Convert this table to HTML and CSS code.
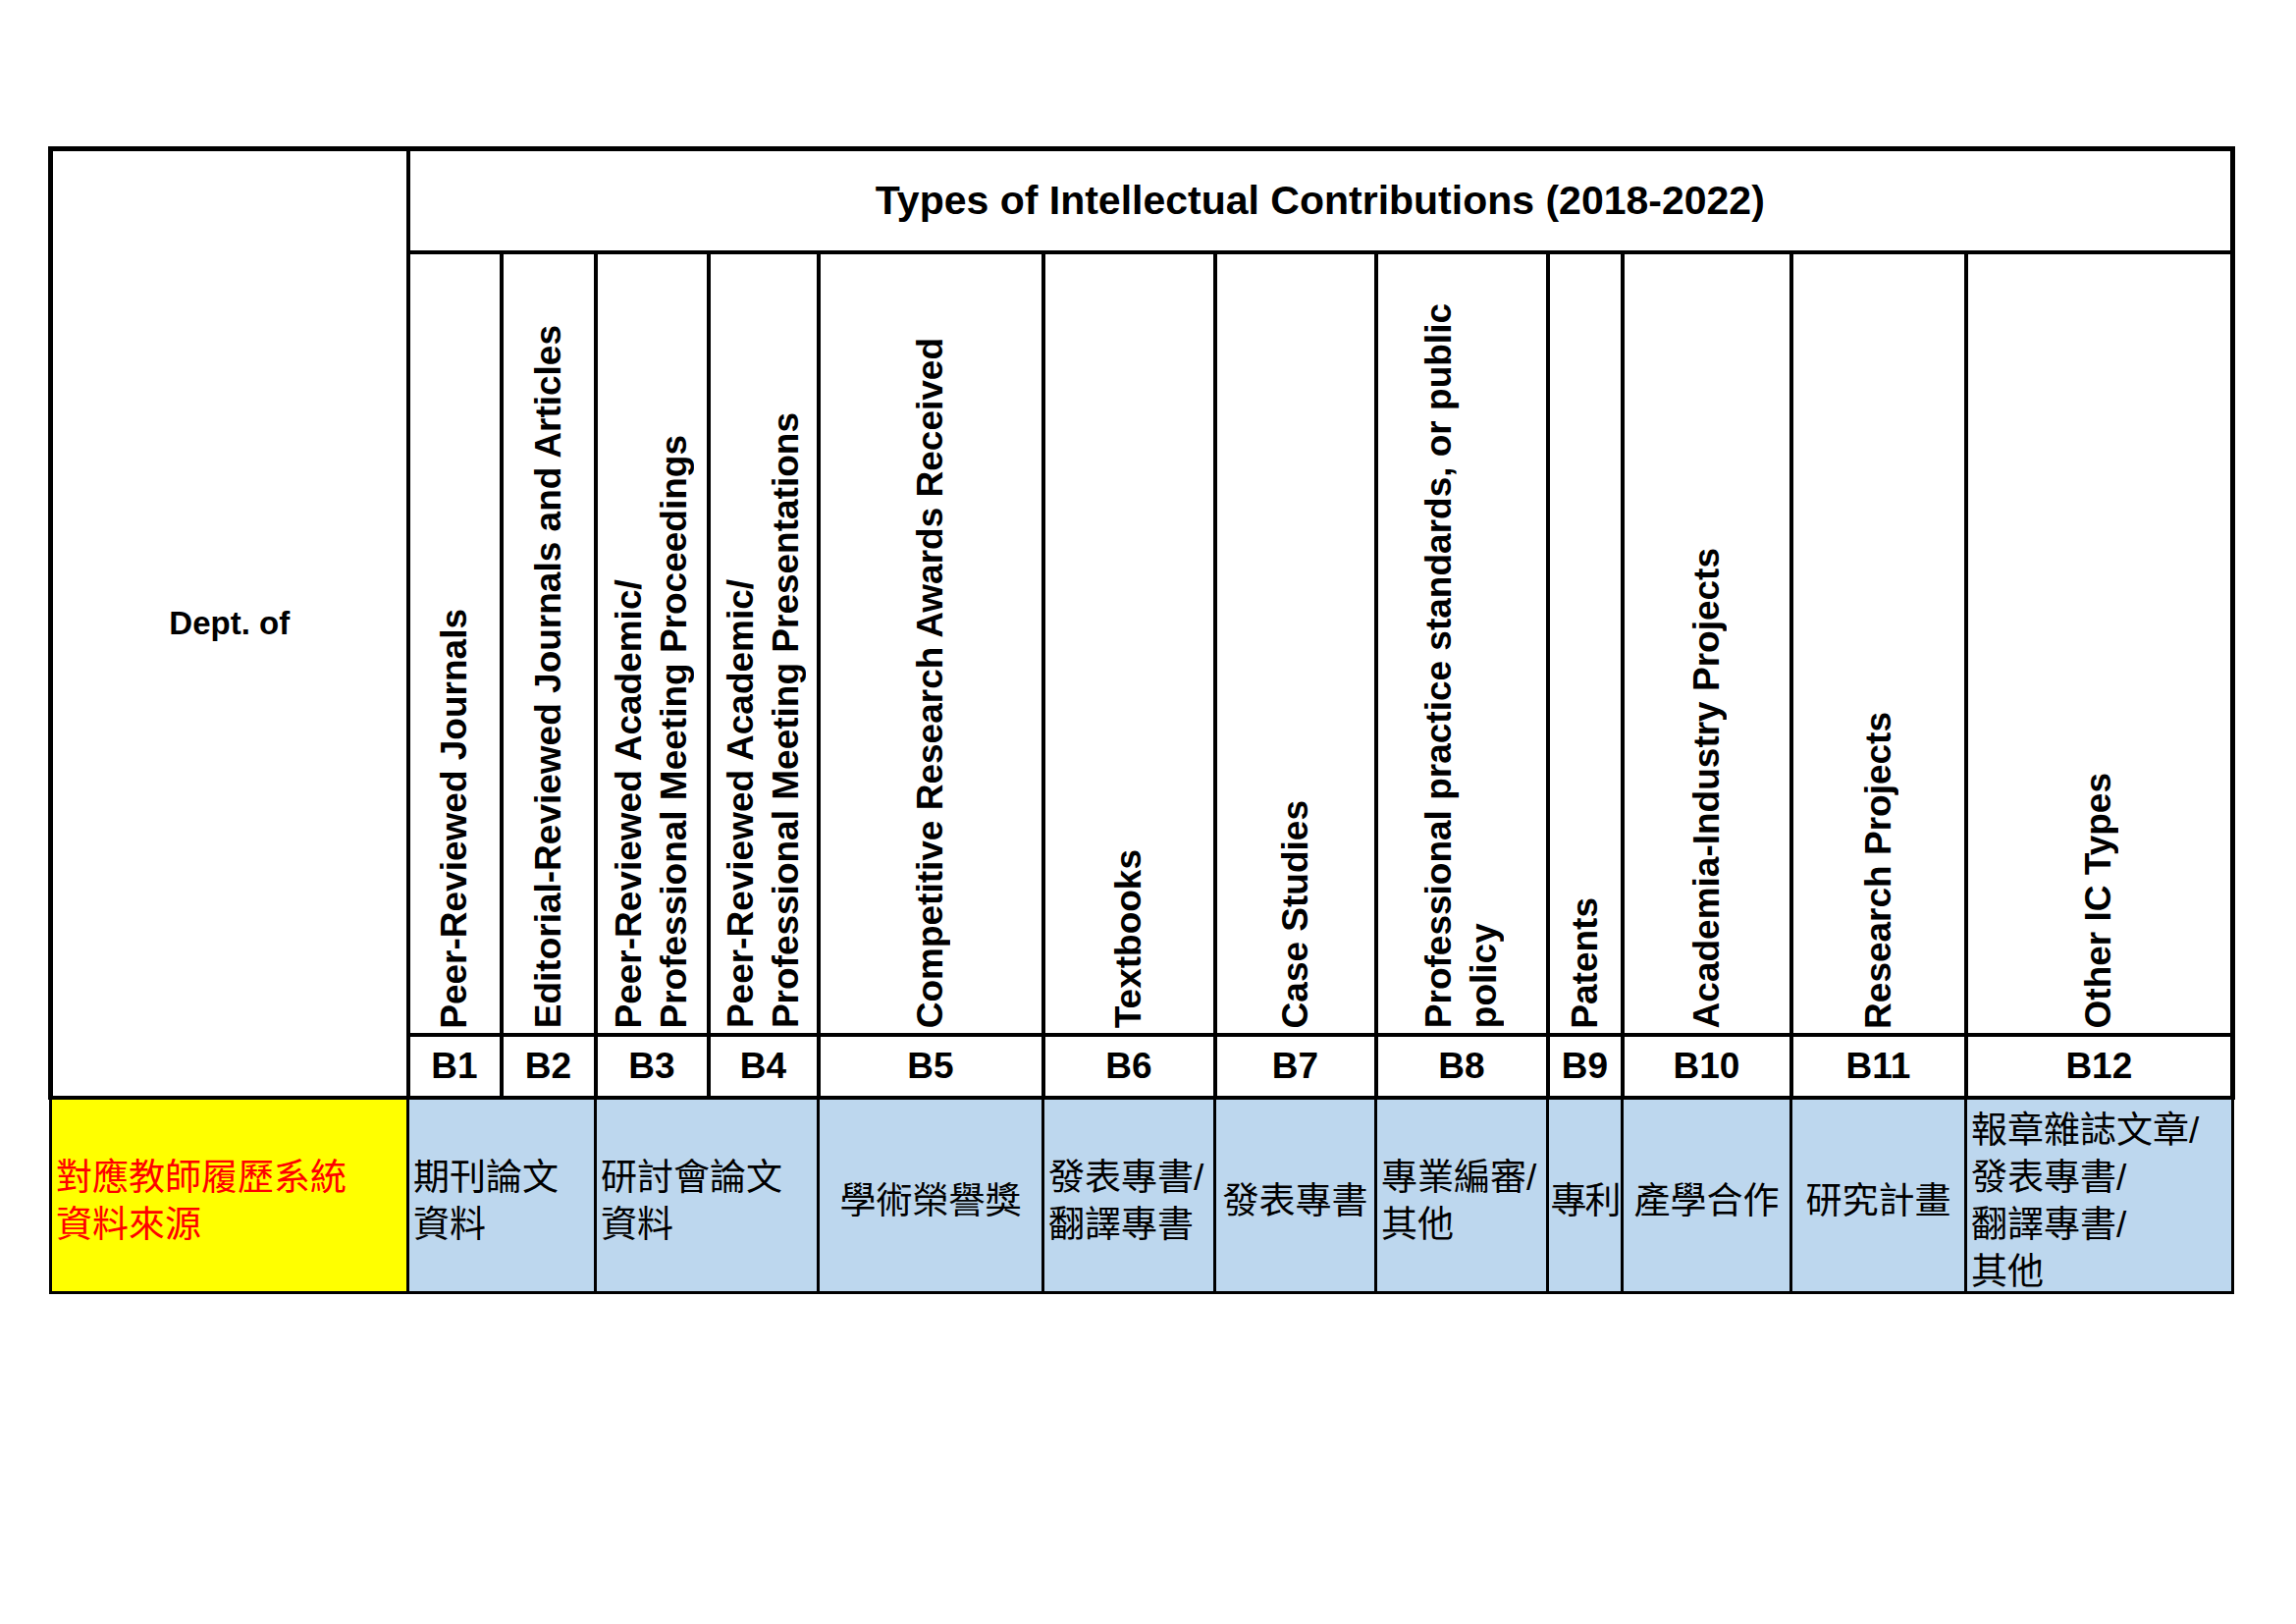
FILE: index.html
```html
<!DOCTYPE html>
<html lang="zh-Hant">
<head>
<meta charset="utf-8">
<title>Types of Intellectual Contributions (2018-2022)</title>
<link rel="stylesheet" href="styles.css">
</head>
<body>
<div class="page">
<table class="ic">
<colgroup>
<col class="c-dept"><col class="c-b1"><col class="c-b2"><col class="c-b3"><col class="c-b4"><col class="c-b5"><col class="c-b6"><col class="c-b7"><col class="c-b8"><col class="c-b9"><col class="c-b10"><col class="c-b11"><col class="c-b12">
</colgroup>
<tr class="r-title">
<th class="dept" rowspan="3">Dept. of</th>
<th class="title" colspan="12">Types of Intellectual Contributions (2018-2022)</th>
</tr>
<tr class="r-rot">
<th class="rot"><div class="vwrap"><div class="vt">Peer-Reviewed Journals</div></div></th>
<th class="rot"><div class="vwrap"><div class="vt">Editorial-Reviewed Journals and Articles</div></div></th>
<th class="rot"><div class="vwrap"><div class="vt">Peer-Reviewed Academic/<br>Professional Meeting Proceedings</div></div></th>
<th class="rot"><div class="vwrap"><div class="vt">Peer-Reviewed Academic/<br>Professional Meeting Presentations</div></div></th>
<th class="rot"><div class="vwrap"><div class="vt">Competitive Research Awards Received</div></div></th>
<th class="rot"><div class="vwrap"><div class="vt">Textbooks</div></div></th>
<th class="rot"><div class="vwrap"><div class="vt">Case Studies</div></div></th>
<th class="rot"><div class="vwrap"><div class="vt">Professional practice standards, or public<br>policy</div></div></th>
<th class="rot"><div class="vwrap"><div class="vt">Patents</div></div></th>
<th class="rot"><div class="vwrap"><div class="vt">Academia-Industry Projects</div></div></th>
<th class="rot"><div class="vwrap"><div class="vt">Research Projects</div></div></th>
<th class="rot"><div class="vwrap"><div class="vt">Other IC Types</div></div></th>
</tr>
<tr class="r-code">
<th class="code">B1</th><th class="code">B2</th><th class="code">B3</th><th class="code">B4</th><th class="code">B5</th><th class="code">B6</th><th class="code">B7</th><th class="code">B8</th><th class="code">B9</th><th class="code">B10</th><th class="code">B11</th><th class="code">B12</th>
</tr>
<tr class="r-src">
<td class="src"><span class="tx">對應教師履歷系統<br>資料來源</span></td>
<td class="info left" colspan="2"><span class="tx">期刊論文<br>資料</span></td>
<td class="info left" colspan="2"><span class="tx">研討會論文<br>資料</span></td>
<td class="info center"><span class="tx">學術榮譽獎</span></td>
<td class="info left"><span class="tx">發表專書/<br>翻譯專書</span></td>
<td class="info center"><span class="tx">發表專書</span></td>
<td class="info left"><span class="tx">專業編審/<br>其他</span></td>
<td class="info center tight"><span class="tx">專利</span></td>
<td class="info center"><span class="tx">產學合作</span></td>
<td class="info center"><span class="tx">研究計畫</span></td>
<td class="info left"><span class="tx">報章雜誌文章/<br>發表專書/<br>翻譯專書/<br>其他</span></td>
</tr>
</table>
</div>
</body>
</html>
```

FILE: styles.css
```css
html, body {
  margin: 0;
  padding: 0;
  background: #ffffff;
}

.page {
  padding: 149px 0 0 49px;
}

.ic {
  border-collapse: collapse;
  table-layout: fixed;
  width: 2223px;
  font-family: "Liberation Sans", Arial, sans-serif;
  color: #000;
}

.c-dept { width: 364px; }
.c-b1 { width: 95px; }
.c-b2 { width: 96px; }
.c-b3 { width: 115px; }
.c-b4 { width: 112px; }
.c-b5 { width: 229px; }
.c-b6 { width: 175px; }
.c-b7 { width: 164px; }
.c-b8 { width: 175px; }
.c-b9 { width: 76px; }
.c-b10 { width: 172px; }
.c-b11 { width: 178px; }
.c-b12 { width: 272px; }

th {
  border: 4px solid #000;
  padding: 0;
  font-weight: bold;
  font-size: 37px;
}

td {
  border: 3px solid #000;
  padding: 0;
}

.r-title { height: 105px; }
.r-rot { height: 797px; }
.r-code { height: 64px; }
.r-src { height: 199px; }

.dept {
  border-top-width: 5px;
  border-left-width: 5px;
  text-align: center;
  vertical-align: middle;
  font-size: 33px;
}

.title {
  border-top-width: 5px;
  border-right-width: 5px;
  font-size: 41px;
  text-align: center;
  vertical-align: middle;
}

.rot {
  vertical-align: bottom;
  padding-bottom: 4px;
}

.vwrap {
  height: 770px;
  display: flex;
  justify-content: center;
  align-items: flex-end;
}

.vt {
  writing-mode: vertical-rl;
  transform: rotate(180deg);
  text-align: start;
  white-space: nowrap;
  line-height: 46px;
}

.code {
  text-align: center;
  vertical-align: middle;
  line-height: 1;
}

.r-code .code:last-child,
.r-rot .rot:last-child {
  border-right-width: 5px;
}

.src,
.info {
  font-family: "Liberation Sans", "Noto Sans CJK TC", sans-serif;
  font-size: 37px;
  line-height: 48px;
  vertical-align: middle;
}

.src {
  background: #ffff00;
  color: #ff0000;
  text-align: left;
  padding-left: 4px;
}

.info {
  background: #bdd7ee;
  color: #000;
}

.tx {
  line-height: 34px;
  vertical-align: -7px;
}

.left {
  text-align: left;
  padding-left: 4px;
}

.center {
  text-align: center;
}

.tight {
  white-space: nowrap;
  letter-spacing: -2px;
}
```
